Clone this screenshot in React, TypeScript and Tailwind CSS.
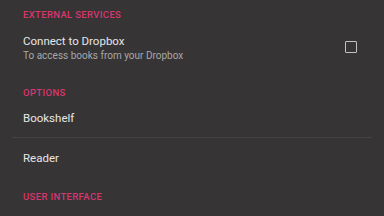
import React from 'react';

const font = { fontFamily: 'Roboto, "Noto Sans", sans-serif' };

function Header({ label, className }: { label: string; className: string }) {
  return (
    <div className={`flex items-center px-[23px] ${className}`}>
      <span className="text-[9.5px] font-medium tracking-[0.35px] text-[#d7376f] uppercase leading-none">
        {label}
      </span>
    </div>
  );
}

function Item({ title, divider }: { title: string; divider?: boolean }) {
  return (
    <div className="mx-3">
      <div
        className={`h-[39px] flex items-center px-[11px] pt-[2px] ${
          divider ? 'border-b border-[#444244]' : ''
        }`}
      >
        <span className="text-[11.5px] text-[#e6e6e6]">{title}</span>
      </div>
    </div>
  );
}

export default function App() {
  return (
    <div className="w-[384px] h-[216px] overflow-hidden bg-[#363435]" style={font}>
      <Header label="External Services" className="h-[29px]" />

      <div className="h-[57px] flex items-start pl-[23px] pr-[27px] pt-[5px]">
        <div className="flex-1 flex flex-col">
          <span className="text-[11.5px] leading-[14px] text-[#e6e6e6]">Connect to Dropbox</span>
          <span className="text-[10px] leading-[15px] text-[#a8a8a8]">
            To access books from your Dropbox
          </span>
        </div>
        <div className="mt-[7px] w-3 h-3 border-[1.5px] border-[#c2c2c2] rounded-[1px]" />
      </div>

      <Header label="Options" className="h-[13px]" />
      <Item title="Bookshelf" divider />
      <Item title="Reader" />
      <Header label="User Interface" className="h-[39px]" />
    </div>
  );
}
